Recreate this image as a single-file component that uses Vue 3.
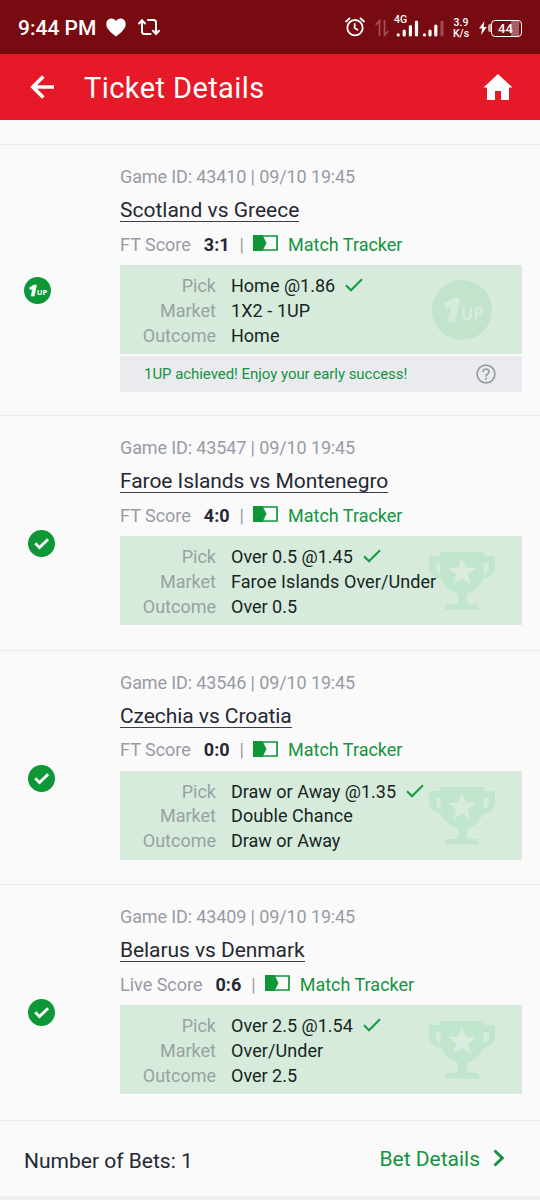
<script setup>
const bets = [
  { id: '43410', teams: 'Scotland vs Greece', label: 'FT Score', score: '3:1', pick: 'Home @1.86', market: '1X2 - 1UP', outcome: 'Home', oneUp: true },
  { id: '43547', teams: 'Faroe Islands vs Montenegro', label: 'FT Score', score: '4:0', pick: 'Over 0.5 @1.45', market: 'Faroe Islands Over/Under', outcome: 'Over 0.5' },
  { id: '43546', teams: 'Czechia vs Croatia', label: 'FT Score', score: '0:0', pick: 'Draw or Away @1.35', market: 'Double Chance', outcome: 'Draw or Away' },
  { id: '43409', teams: 'Belarus vs Denmark', label: 'Live Score', score: '0:6', pick: 'Over 2.5 @1.54', market: 'Over/Under', outcome: 'Over 2.5' }
]
</script>

<template>
  <div class="screen">
    <div class="status">
      <span class="clock">9:44 PM</span>
      <svg class="heart" width="20" height="19" viewBox="0 0 20 19"><path fill="#fff" d="M10 18.500C7 16 .3 11.500.3 6.200.3 2.700 2.600.5 5.300.5 7.300.5 9.100 1.600 10 3.200 10.900 1.600 12.700.5 14.700.5c2.700 0 5 2.200 5 5.700 0 5.300-6.700 9.800-9.700 12.300z"/></svg>
      <svg class="loop" width="24" height="18" viewBox="0 0 24 18" fill="none" stroke="#fff" stroke-width="2" stroke-linecap="round"><path d="M5 2.500V13.500Q5 16 7.500 16H13.500M11 2H16.500Q19 2 19 4.500V15M2 5.500 5 2.200 8 5.500M16 12.800 19 16 22 12.800"/></svg>
      <span class="grow"></span>
      <svg class="alarm" width="20" height="20" viewBox="0 0 20 20" fill="none" stroke="#fff" stroke-width="1.800" stroke-linecap="round"><circle cx="10" cy="10.700" r="7.700"/><path d="M1 4.500 4.500 1.300M19 4.500 15.500 1.300M9.700 7v4l2.800 1.800"/></svg>
      <svg class="updown" width="14" height="18" viewBox="0 0 14 18" fill="none" stroke="#a7505c" stroke-width="1.700"><path d="M4.500 17V1.800L.8 6M9.500 1v15.200l3.700-4.200"/></svg>
      <div class="signal">
        <span class="net">4G</span>
        <svg width="48" height="18" viewBox="0 0 48 18" stroke="#fff" stroke-width="3.200" stroke-linecap="round"><path d="M2.200 15.900v.1M8.200 16v-4M14.400 16V7.500M20.500 16V3M28.500 15.900v.1M34 16v-4M39.800 16V7"/><path stroke="#9b4a54" d="M46 16V3"/></svg>
      </div>
      <div class="speed"><span>3.9</span><span>K/s</span></div>
      <svg class="bolt" width="8" height="14" viewBox="0 0 8 14"><path fill="#fff" d="M5.500 0 0 7.500h3.200L2 14l5.800-8H4.500z"/></svg>
      <span class="nub"></span>
      <span class="battery"><b>44</b></span>
    </div>

    <header class="bar">
      <svg class="back" width="24" height="24" viewBox="0 0 24 24" fill="none" stroke="#fff" stroke-width="3.600"><path d="M13.300 1.500 2.800 12l10.500 10.500M2.600 12H24"/></svg>
      <h1>Ticket Details</h1>
      <svg class="home" width="30" height="26" viewBox="0 0 30 26"><path fill="#fff" d="M15 0 29.500 13.500H26V26h-8v-9h-6v9H4V13.500H.5z"/></svg>
    </header>

    <main>
      <section v-for="bet in bets" :key="bet.id" class="bet" :class="{ up: bet.oneUp }">
        <div class="mark">
          <svg v-if="bet.oneUp" width="27" height="27" viewBox="0 0 60 60"><circle cx="30" cy="30" r="30" fill="#0d9737"/><text x="9.500" y="41.500" class="one" fill="#fff" stroke="#fff">1</text><text x="28.500" y="41" class="upper" fill="#fff">UP</text></svg>
          <svg v-else width="27" height="27" viewBox="0 0 27 27"><circle cx="13.500" cy="13.500" r="13.500" fill="#0d9737"/><path d="m7.200 13.300 4.300 4.200 8.600-8.300" fill="none" stroke="#fff" stroke-width="2.800"/></svg>
        </div>
        <div class="body">
          <div class="game">Game ID: {{ bet.id }} | 09/10 19:45</div>
          <div class="teams"><span>{{ bet.teams }}</span></div>
          <div class="score">
            <span>{{ bet.label }}</span><b>{{ bet.score }}</b><span class="sep">|</span>
            <svg width="25" height="16" viewBox="0 0 25 16"><path d="M1 1h23v14H1z" fill="none" stroke="#0d9737" stroke-width="1.700"/><path d="M0 0h9.500l4 8-4 8H0z" fill="#0d9737"/></svg>
            <span class="tracker">Match Tracker</span>
          </div>
          <div class="pickbox">
            <svg v-if="bet.oneUp" class="wm-up" width="60" height="60" viewBox="0 0 60 60"><circle cx="30" cy="30" r="30" fill="#c2e3cc"/><text x="9.500" y="41.500" class="one" fill="#d6ebdc" stroke="#d6ebdc">1</text><text x="28.500" y="40" class="upper" fill="#d6ebdc">UP</text></svg>
            <svg v-else class="wm-cup" width="66" height="58" viewBox="0 0 66 58"><path fill="#c2e5cd" fill-rule="evenodd" d="M11 0H55V4H66V14Q66 25 54 27Q49 38 38 42V50Q38 52 44 52H48L51 57.500H15L18 52H22Q29 52 29 50V42Q17 38 12 27Q0 25 0 14V4H11zM7 11V15Q7 21 11.500 22V11zM54.500 11V22Q60 21 60 15V11z"/><path fill="#d9ecdf" d="m33 6 3.500 9.800 10.500.3-8.300 6.300 3 10L33 26.500l-8.700 5.900 3-10L19 16.100l10.500-.3z"/></svg>
            <dl>
              <dt>Pick</dt><dd>{{ bet.pick }}<svg class="tick" width="18" height="14" viewBox="0 0 18 14"><path d="m1 7.300 5 5L17 1.300" fill="none" stroke="#159b42" stroke-width="2"/></svg></dd>
              <dt>Market</dt><dd class="market">{{ bet.market }}</dd>
              <dt>Outcome</dt><dd>{{ bet.outcome }}</dd>
            </dl>
          </div>
          <div v-if="bet.oneUp" class="notice">
            <span>1UP achieved! Enjoy your early success!</span>
            <svg width="20" height="20" viewBox="0 0 20 20" fill="none" stroke="#989ba5" stroke-width="1.700"><circle cx="10" cy="10" r="8.900"/><path d="M7 8q0-3 3-3t3 2.700c0 2.300-3 2.300-3 4.800M10 13.800v1.900"/></svg>
          </div>
        </div>
      </section>
    </main>

    <footer>
      <span class="count">Number of Bets: 1</span>
      <span class="details">Bet Details</span>
      <svg width="12" height="18" viewBox="0 0 12 18" fill="none" stroke="#159340" stroke-width="3"><path d="m1.500 1.500 7.800 7.500-7.800 7.500"/></svg>
    </footer>
  </div>
</template>

<style>
body { background: #fafafb; }
</style>

<style scoped>
.screen { width: 540px; height: 1200px; overflow: hidden; background: #fafafb; font-family: Roboto, sans-serif; color: #252832; display: flex; flex-direction: column; }
.status { flex: none; height: 54px; background: #780a12; color: #fff; display: flex; align-items: center; padding: 2px 18px 0; box-sizing: border-box; }
.clock { font-size: 21px; font-weight: 500; letter-spacing: 0; width: 88px; white-space: nowrap; }
.heart { margin-top: -1px; }
.loop { margin-left: 11px; margin-top: -2px; }
.grow { flex: 1; }
.alarm { margin-right: 10px; margin-top: -2px; }
.updown { margin-right: 7px; }
.signal { position: relative; display: flex; margin-right: 9px; margin-top: 0; }
.net { position: absolute; left: -2px; top: -4px; font-size: 10.500px; font-weight: 500; line-height: 10px; }
.speed { display: flex; flex-direction: column; align-items: center; font-size: 10.500px; font-weight: 500; line-height: 11px; width: 16px; margin-right: 10px; margin-top: -1px; }
.bolt { margin-right: 1px; }
.nub { width: 3px; height: 8px; background: #ccaaae; border-radius: 2px 0 0 2px; }
.battery { width: 31px; height: 17px; box-sizing: border-box; border: 1.500px solid #fff; border-radius: 4px; display: flex; justify-content: center; align-items: center; font-size: 13px; background: linear-gradient(90deg, transparent 66%, #a7606a 66%, #a7606a 92%, transparent 92%); }
.battery b { font-weight: 500; margin-right: 2px; }
.bar { flex: none; height: 66px; background: #e61928; color: #fff; display: flex; align-items: center; padding: 0 27px 0 30px; }
.bar h1 { margin: 2px auto 0 30px; font-size: 29px; font-weight: 400; letter-spacing: .42px; }
main { flex: none; height: 1000px; padding-top: 24px; box-sizing: border-box; }
.bet { height: 234.700px; box-sizing: border-box; border-top: 1.500px solid #e9eaed; display: flex; }
.bet.up { height: 271px; }
.mark { width: 120px; flex: none; padding: 114px 0 0 28px; box-sizing: border-box; }
.up .mark { padding: 132px 0 0 24px; }
.mark svg { display: block; }
.one { font: italic 800 34px "Open Sans", sans-serif; stroke-width: 1px; }
.upper { font: 700 17px "Open Sans", sans-serif; }
.body { width: 402px; padding-top: 20px; }
.game { font-size: 18px; line-height: 24px; color: #989ba5; letter-spacing: -.12px; }
.teams { margin-top: 7px; font-size: 21px; line-height: 28px; letter-spacing: -.07px; }
.up .teams { letter-spacing: 0; }
.teams span { border-bottom: 1.500px solid #3c3f48; line-height: 22px; display: inline-block; }
.score { margin-top: 8px; height: 24px; display: flex; align-items: center; font-size: 18px; color: #989ba5; }
.score b { color: #252832; font-weight: 700; margin-left: 13px; }
.sep { margin-left: 10px; }
.score svg { margin: -2px 0 0 9px; }
.tracker { color: #159340; margin-left: 10px; }
.pickbox { position: relative; margin-top: 9px; height: 89px; background: #d6ebdc; padding-top: 9px; box-sizing: border-box; }
dl { position: relative; margin: 0; display: grid; grid-template-columns: 96px 1fr; column-gap: 15px; grid-auto-rows: 24.800px; line-height: 24.800px; font-size: 18px; }
dt { text-align: right; color: #96a3a0; }
dd { margin: 0; color: #16251d; white-space: nowrap; }
.market { letter-spacing: .08px; }
.tick { margin-left: 10px; }
.wm-up { position: absolute; left: 312px; top: 15px; }
.wm-cup { position: absolute; left: 309px; top: 16px; }
.notice { margin-top: 2px; height: 36px; background: #eaebef; display: flex; align-items: center; justify-content: space-between; padding: 0 26px 0 24px; font-size: 15px; letter-spacing: -.05px; color: #159340; }
footer { flex: none; height: 80px; box-sizing: border-box; border-top: 1.500px solid #e9eaed; border-bottom: 4px solid #f0f1f5; display: flex; align-items: center; padding: 2px 35px 0 24px; font-size: 21px; }
.count { margin-top: 2px; }
.details { margin-left: auto; margin-top: -2px; color: #159340; }
footer svg { margin-left: 13px; margin-top: -3px; }
</style>
